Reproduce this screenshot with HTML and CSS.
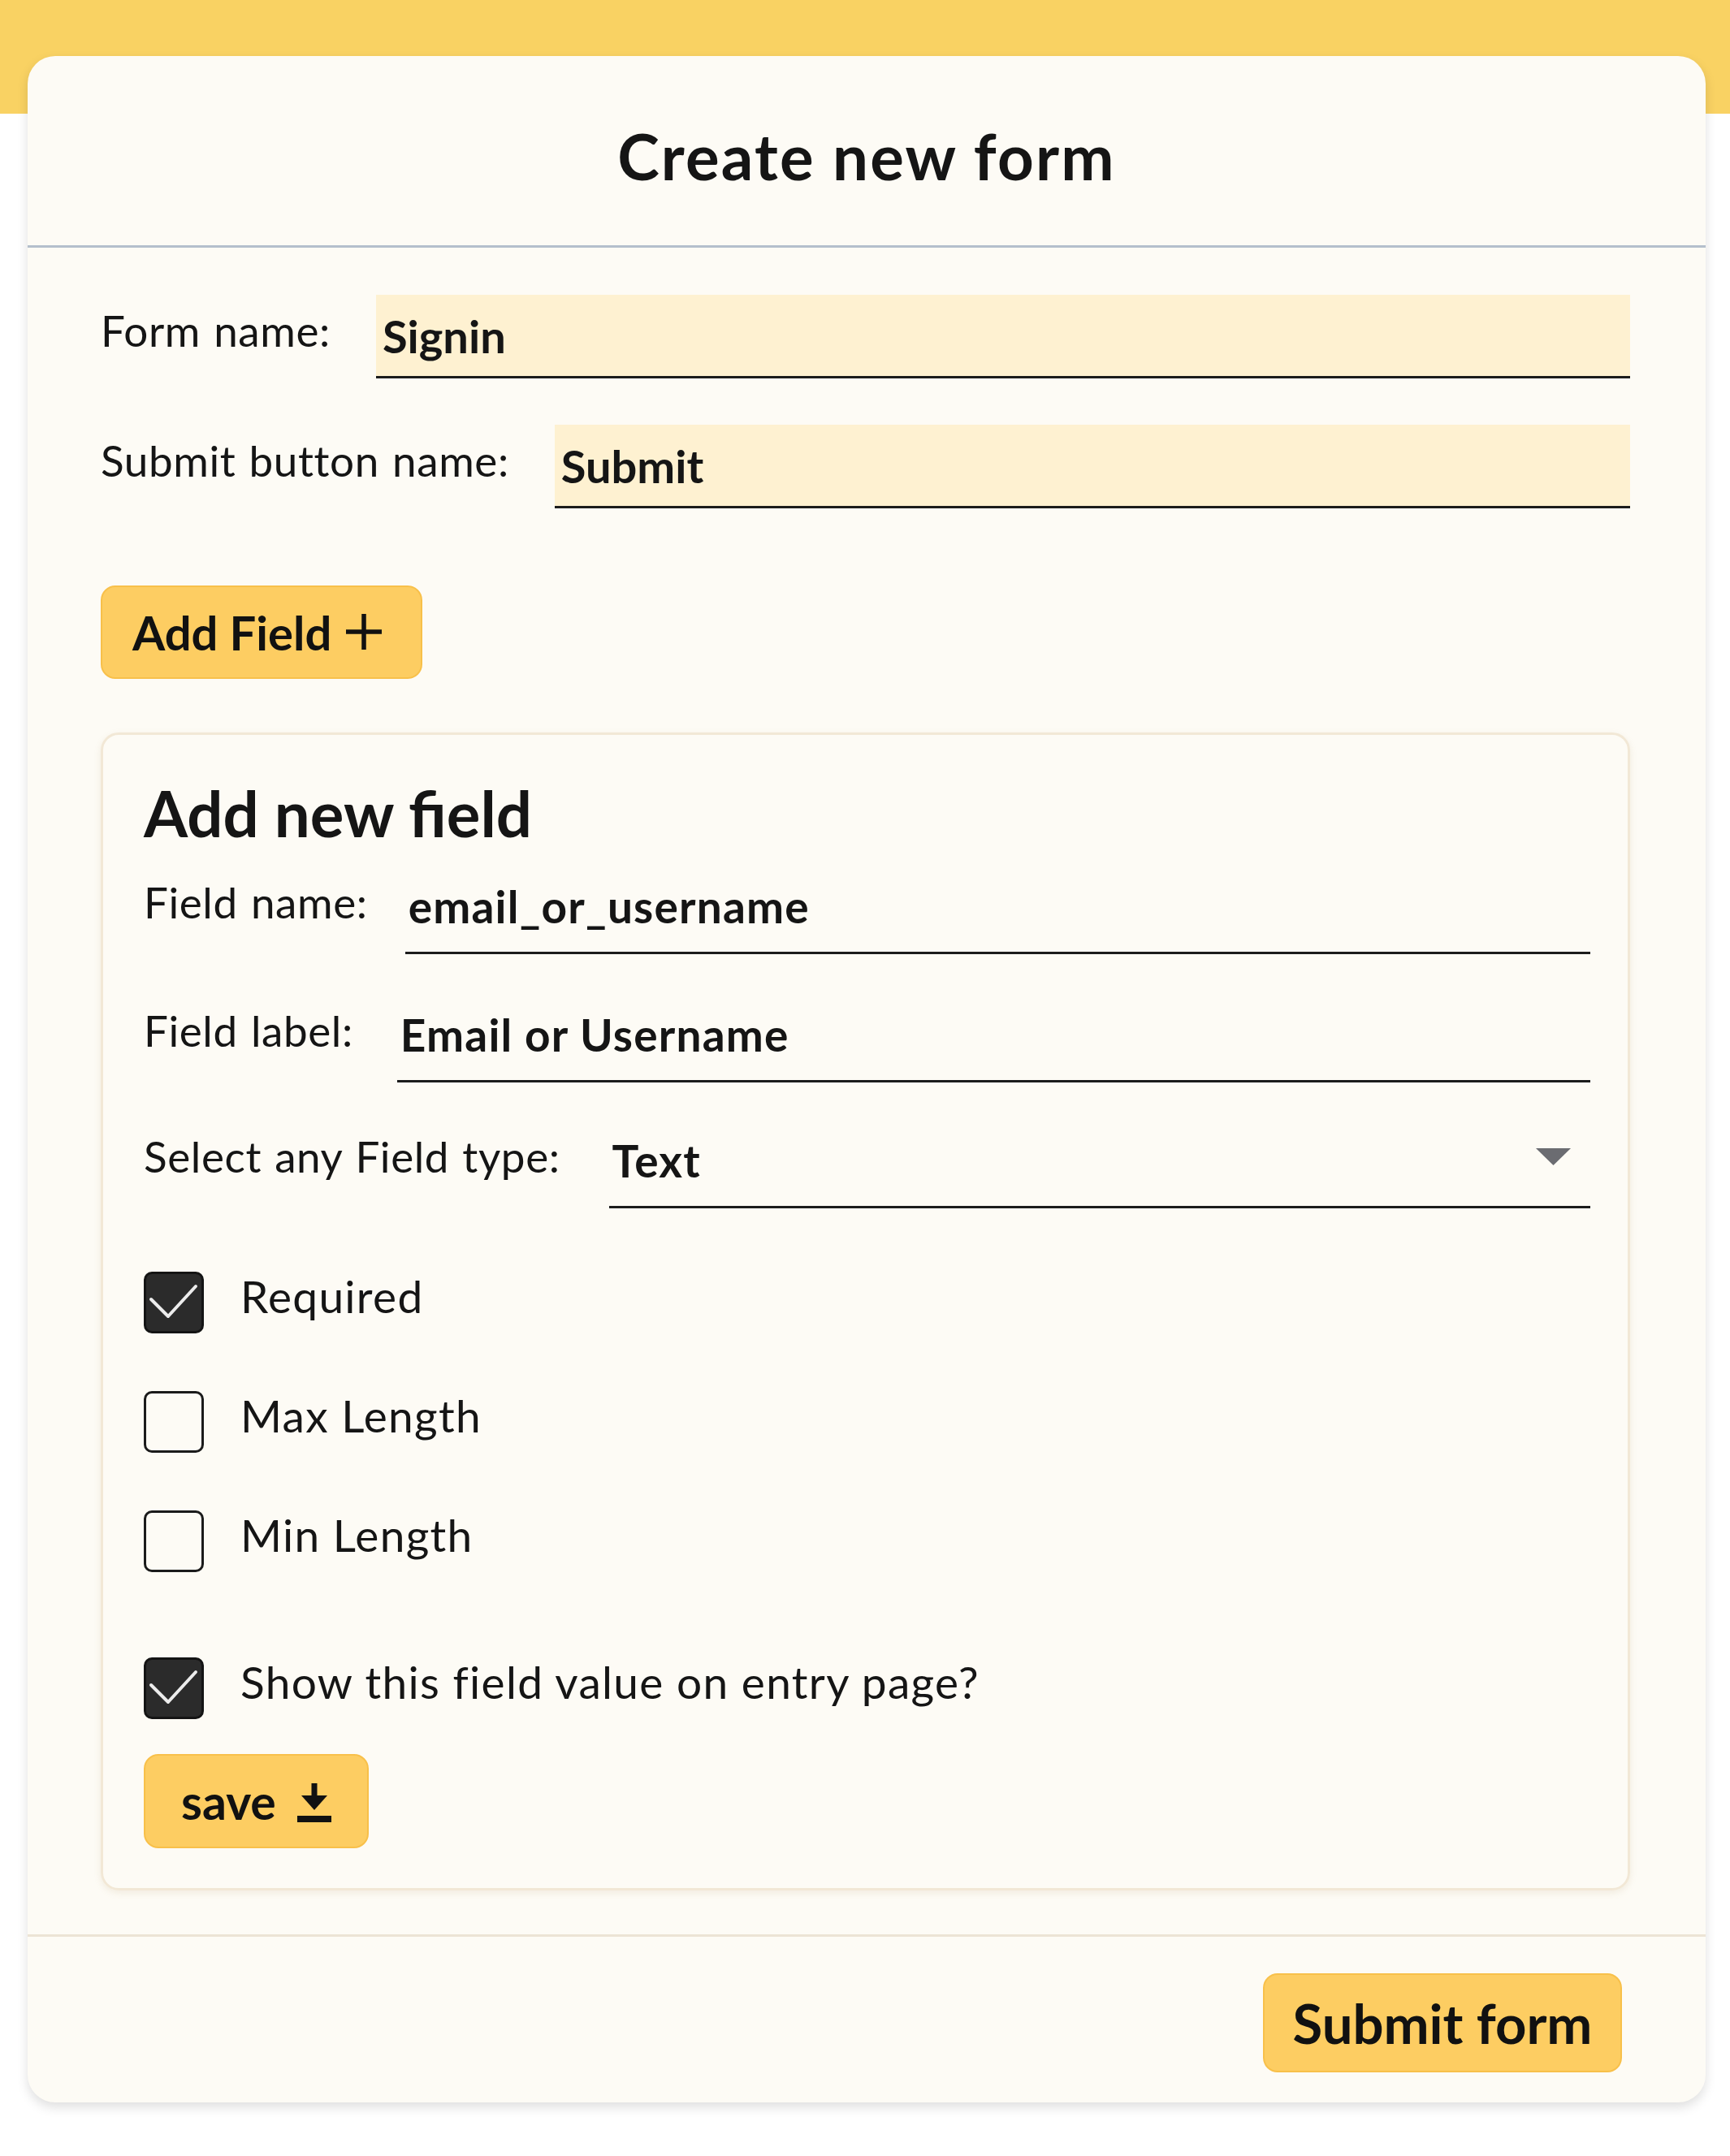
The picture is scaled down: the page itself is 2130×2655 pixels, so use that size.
FILE: index.html
```html
<!DOCTYPE html>
<html lang="en">
<head>
<meta charset="utf-8">
<title>Create new form</title>
<link rel="stylesheet" href="styles.css">
</head>
<body>
<div class="page">
  <div class="card">
    <header class="card-head">
      <h1 class="title">Create new form</h1>
    </header>

    <div class="card-body">
      <div class="row">
        <span class="lbl">Form name:</span>
        <div class="inp">Signin</div>
      </div>
      <div class="row">
        <span class="lbl">Submit button name:</span>
        <div class="inp">Submit</div>
      </div>

      <button class="btn btn-add" type="button">Add Field
        <svg class="plus" viewBox="0 0 44 44" width="44" height="44"><path d="M22 0V44M0 22H44" stroke="#111" stroke-width="5.5" fill="none"/></svg>
      </button>

      <section class="panel">
        <h2 class="panel-title">Add new field</h2>

        <div class="frow">
          <span class="lbl flbl">Field name:</span>
          <div class="line line-name">email_or_username</div>
        </div>
        <div class="frow">
          <span class="lbl flbl">Field label:</span>
          <div class="line line-label">Email or Username</div>
        </div>
        <div class="frow frow-select">
          <span class="lbl flbl">Select any Field type:</span>
          <div class="line line-select">
            <span>Text</span>
            <svg class="caret" viewBox="0 0 43 21" width="43" height="21"><polygon points="0,0 43,0 21.5,21" fill="#6b6c71"/></svg>
          </div>
        </div>

        <div class="checks">
          <div class="chk">
            <span class="box on"><svg viewBox="0 0 74 76" width="74" height="76"><polyline points="9,34 30,55 64,18" fill="none" stroke="#ececec" stroke-width="4" stroke-linecap="round" stroke-linejoin="round"/></svg></span>
            <span class="chk-text">Required</span>
          </div>
          <div class="chk">
            <span class="box"></span>
            <span class="chk-text">Max Length</span>
          </div>
          <div class="chk">
            <span class="box"></span>
            <span class="chk-text">Min Length</span>
          </div>
          <div class="chk chk-show">
            <span class="box on"><svg viewBox="0 0 74 76" width="74" height="76"><polyline points="9,34 30,55 64,18" fill="none" stroke="#ececec" stroke-width="4" stroke-linecap="round" stroke-linejoin="round"/></svg></span>
            <span class="chk-text">Show this field value on entry page?</span>
          </div>
        </div>

        <button class="btn btn-save" type="button">save
          <svg class="dl" viewBox="0 0 42 48" width="42" height="48"><rect x="17.5" y="0" width="7" height="18" fill="#111"/><polygon points="5,15 37,15 21,33" fill="#111"/><rect x="0" y="40" width="42" height="8" fill="#111"/></svg>
        </button>
      </section>
    </div>

    <footer class="card-foot">
      <button class="btn btn-submit" type="button">Submit form</button>
    </footer>
  </div>
</div>
</body>
</html>
```

FILE: styles.css
```css
* { box-sizing: border-box; }

html {
  background: #ffffff;
}

body {
  margin: 0;
  background: #ffffff linear-gradient(#f9d263 0, #f9d263 140px, #ffffff 140px) no-repeat top left / 100% 140px;
  font-family: "Lato", "Open Sans", "DejaVu Sans", sans-serif;
  color: #151515;
}

.page {
  padding: 69px 30px 65px 34px;
}

.card {
  background: #fdfbf5;
  border-radius: 34px;
  box-shadow: 0 6px 14px rgba(0, 0, 0, 0.13);
}

.card-head {
  height: 236px;
  display: flex;
  align-items: center;
  justify-content: center;
  padding-top: 12px;
  border-bottom: 3px solid #b4bfcc;
}

.title {
  margin: 0;
  font-size: 78px;
  font-weight: 700;
  line-height: 1;
  letter-spacing: 2.2px;
}

.card-body {
  padding: 58px 93px 54px 90px;
}

.row {
  display: flex;
  align-items: center;
  gap: 56px;
}

.row + .row {
  margin-top: 57px;
}

.lbl {
  font-size: 53px;
  line-height: 1;
  letter-spacing: 0.6px;
  word-spacing: 2px;
  white-space: nowrap;
}

.row .lbl {
  margin-bottom: 16px;
}

.inp {
  flex: 1;
  height: 103px;
  background: #fef1d1;
  border-bottom: 3px solid #1c1c1c;
  display: flex;
  align-items: center;
  padding-left: 8px;
  font-size: 56px;
  font-weight: 700;
}

.btn {
  font-family: inherit;
  color: #111;
  background: #fdcd62;
  border: 2px solid #f8c04a;
  border-radius: 18px;
  cursor: pointer;
  display: flex;
  align-items: center;
}

.btn-add {
  margin-top: 95px;
  width: 396px;
  height: 115px;
  padding: 0 0 0 37px;
  font-size: 58px;
  font-weight: 700;
  gap: 18px;
}

.plus {
  display: block;
  margin-top: -2px;
}

.panel {
  margin-top: 66px;
  border: 3px solid #f2e8d6;
  border-radius: 22px;
  box-shadow: 0 3px 8px rgba(170, 140, 90, 0.14);
  padding: 57px 46px 49px 50px;
}

.panel-title {
  margin: 0;
  font-size: 78px;
  font-weight: 700;
  line-height: 1;
}

.frow {
  display: flex;
  align-items: flex-end;
  gap: 46px;
  margin-top: 67px;
}

.panel-title + .frow {
  margin-top: 44px;
}

.frow.frow-select {
  margin-top: 64px;
}

.flbl {
  padding-bottom: 38px;
}

.line {
  flex: 1;
  border-bottom: 3px solid #1c1c1c;
  font-size: 55px;
  font-weight: 700;
  letter-spacing: 1.2px;
  line-height: 1;
  padding: 0 0 28px 4px;
  display: flex;
  align-items: flex-end;
  justify-content: space-between;
}

.line-label {
  margin-left: 8px;
}

.line-select {
  margin-left: 14px;
}

.caret {
  margin: 0 24px 10px 0;
  align-self: center;
}

.checks {
  margin-top: 78px;
}

.chk {
  display: flex;
  align-items: center;
  gap: 45px;
  height: 76px;
}

.chk + .chk {
  margin-top: 71px;
}

.chk.chk-show {
  margin-top: 105px;
}

.box {
  width: 74px;
  height: 76px;
  border: 3px solid #1b1b1b;
  border-radius: 10px;
  flex: none;
  overflow: hidden;
  display: block;
}

.box.on {
  background: #2b2b2b;
  border-color: #141414;
}

.box svg {
  display: block;
  margin: -3px;
}

.chk-text {
  font-size: 55px;
  line-height: 1;
  letter-spacing: 1.3px;
  margin-bottom: 16px;
}

.btn-save {
  margin-top: 43px;
  width: 277px;
  height: 116px;
  padding: 0 0 0 44px;
  font-size: 59px;
  font-weight: 700;
  gap: 26px;
}

.dl {
  display: block;
  margin-top: 4px;
}

.card-foot {
  border-top: 3px solid #ece4d5;
  height: 207px;
  display: flex;
  align-items: center;
  justify-content: flex-end;
  padding: 8px 103px 0 0;
}

.btn-submit {
  width: 442px;
  height: 122px;
  justify-content: center;
  font-size: 67px;
  font-weight: 700;
}
```
